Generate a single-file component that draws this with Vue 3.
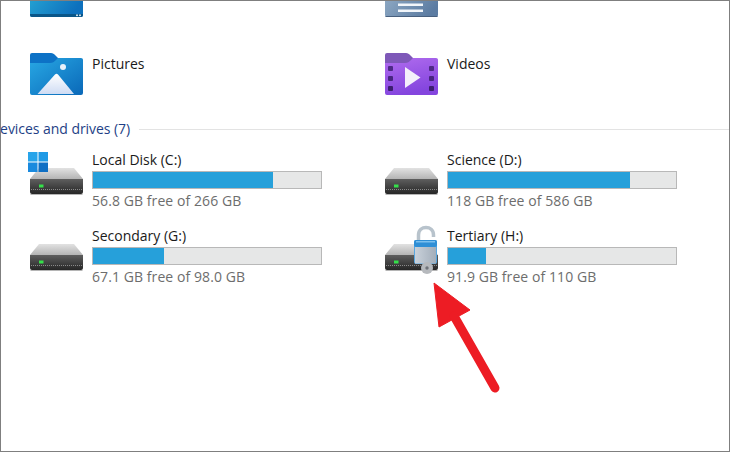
<script setup>
const drives = [
  { name: 'Local Disk (C:)', free: '56.8 GB free of 266 GB', used: 79, badge: 'win' },
  { name: 'Science (D:)', free: '118 GB free of 586 GB', used: 79.8 },
  { name: 'Secondary (G:)', free: '67.1 GB free of 98.0 GB', used: 31.1 },
  { name: 'Tertiary (H:)', free: '91.9 GB free of 110 GB', used: 16.7, badge: 'lock' }
]
</script>

<template>
  <div class="page">
    <div class="row top-row">
      <div class="col">
        <svg class="icon" width="53" height="42" viewBox="0 0 53 42">
          <defs>
            <linearGradient id="tl" x1="0" y1="0" x2="1" y2="0.6">
              <stop offset="0" stop-color="#2cb0d8" />
              <stop offset="1" stop-color="#0d70bd" />
            </linearGradient>
          </defs>
          <rect x="0" y="0" width="53" height="41" rx="2" fill="url(#tl)" />
          <path d="M0 38h53v1a2 2 0 0 1-2 2H2a2 2 0 0 1-2-2z" fill="#0a5688" />
          <rect x="46" y="38.5" width="2" height="1.6" fill="#c6dcea" />
          <rect x="49" y="38.5" width="2" height="1.6" fill="#c6dcea" />
        </svg>
      </div>
      <div class="col">
        <svg class="icon" width="53" height="42" viewBox="0 0 53 42">
          <defs>
            <linearGradient id="tr" x1="0" y1="0" x2="1" y2="0.7">
              <stop offset="0" stop-color="#9fb8cf" />
              <stop offset="1" stop-color="#5c7ca2" />
            </linearGradient>
          </defs>
          <rect x="0" y="0" width="53" height="41" rx="2" fill="url(#tr)" />
          <rect x="13" y="27.5" width="25" height="2.500" fill="#f2f6fa" />
          <rect x="13" y="33.500" width="25" height="2.500" fill="#f2f6fa" />
          <path d="M0 40h53a2 2 0 0 1-2 1H2a2 2 0 0 1-2-1z" fill="#48607f" />
        </svg>
      </div>
    </div>

    <div class="row folder-row">
      <div class="col">
        <svg class="icon" width="53" height="42" viewBox="0 0 53 42">
          <defs>
            <linearGradient id="pb" x1="0" y1="0" x2="1" y2="1">
              <stop offset="0" stop-color="#28a8e4" />
              <stop offset="1" stop-color="#0a68b8" />
            </linearGradient>
            <linearGradient id="pm" x1="0" y1="0" x2="0" y2="1">
              <stop offset="0" stop-color="#ffffff" />
              <stop offset="1" stop-color="#cfdcf4" />
            </linearGradient>
          </defs>
          <path d="M2 0h19c2 0 3 1 4 2l4 4h22a2 2 0 0 1 2 2v4H0V2a2 2 0 0 1 2-2z" fill="#0d72c6" />
          <path d="M0 10h20c3 0 4-1 6-3l2-2h23a2 2 0 0 1 2 2v33a2 2 0 0 1-2 2H2a2 2 0 0 1-2-2z" fill="url(#pb)" />
          <path d="M7.5 41L25 21.5a2 2 0 0 1 3 0L44 41z" fill="url(#pm)" />
          <circle cx="33" cy="14" r="3" fill="#e8f2fb" />
        </svg>
        <div class="name">Pictures</div>
      </div>
      <div class="col">
        <svg class="icon" width="53" height="42" viewBox="0 0 53 42">
          <defs>
            <linearGradient id="vb" x1="0" y1="0" x2="0.3" y2="1">
              <stop offset="0" stop-color="#b06cee" />
              <stop offset="1" stop-color="#8445de" />
            </linearGradient>
          </defs>
          <path d="M2 0h19c2 0 3 1 4 2l4 4h22a2 2 0 0 1 2 2v4H0V2a2 2 0 0 1 2-2z" fill="#7e58b8" />
          <path d="M0 10h20c3 0 4-1 6-3l2-2h23a2 2 0 0 1 2 2v33a2 2 0 0 1-2 2H2a2 2 0 0 1-2-2z" fill="url(#vb)" />
          <rect x="3" y="13" width="5" height="5" rx="1" fill="#4d2a86" />
          <rect x="3" y="23" width="5" height="5" rx="1" fill="#472680" />
          <rect x="3" y="33" width="5" height="5" rx="1" fill="#3c1f70" />
          <rect x="44" y="13" width="5" height="5" rx="1" fill="#4d2a86" />
          <rect x="44" y="23" width="5" height="5" rx="1" fill="#472680" />
          <rect x="44" y="33" width="5" height="5" rx="1" fill="#3c1f70" />
          <path d="M20 14L35.500 24.500 20 35z" fill="#f4effb" />
        </svg>
        <div class="name">Videos</div>
      </div>
    </div>

    <div class="section">
      <span class="section-title">Devices and drives (7)</span>
      <span class="section-line"></span>
    </div>

    <div class="drives">
      <div v-for="d in drives" :key="d.name" class="col drive">
        <div class="drive-icon">
          <svg width="62" height="46" viewBox="0 0 62 46">
            <defs>
              <linearGradient id="dt" x1="0" y1="0" x2="0" y2="1">
                <stop offset="0" stop-color="#e2e2e2" />
                <stop offset="1" stop-color="#b4b4b4" />
              </linearGradient>
              <linearGradient id="df" x1="0" y1="0" x2="0" y2="1">
                <stop offset="0" stop-color="#5e5e5e" />
                <stop offset="1" stop-color="#262626" />
              </linearGradient>
              <linearGradient id="lb" x1="0" y1="0" x2="1" y2="0">
                <stop offset="0" stop-color="#c9d1da" />
                <stop offset="1" stop-color="#a3aeba" />
              </linearGradient>
            </defs>
            <path d="M9 18h35l9 11H0z" fill="url(#dt)" />
            <path d="M0 29h53v13a2 2 0 0 1-2 2H2a2 2 0 0 1-2-2z" fill="url(#df)" />
            <path d="M1 39.500H52" stroke="#8a8a8a" stroke-width="1" stroke-dasharray="1 1" />
            <rect x="0.500" y="44" width="52" height="1" fill="#b5b5b5" />
            <rect x="9" y="34.500" width="4.500" height="3" fill="#35e04a" />
            <template v-if="d.badge === 'win'">
              <rect x="-2" y="2" width="9.500" height="9.500" fill="#27a4ea" />
              <rect x="8.500" y="2" width="9.500" height="9.500" fill="#1f9ae6" />
              <rect x="-2" y="12.500" width="9.500" height="9.500" fill="#1a8ade" />
              <rect x="8.500" y="12.500" width="9.500" height="9.500" fill="#0f6fc4" />
            </template>
            <template v-if="d.badge === 'lock'">
              <path d="M33.500 15V9C33.500 -1 48.500 -1 48.500 9V11" fill="none" stroke="#b8c3cc" stroke-width="3.500" />
              <rect x="29" y="14" width="23" height="24" rx="2" fill="#5aa7e0" />
              <rect x="29" y="14" width="23" height="7" rx="2" fill="#2f8fd6" />
              <rect x="30" y="21" width="21" height="16.500" fill="url(#lb)" />
              <rect x="31" y="15" width="19" height="1.500" fill="#7cc0ee" />
              <circle cx="42" cy="42" r="6" fill="#b6b9bd" />
              <circle cx="42" cy="42" r="1.700" fill="#6f7379" />
            </template>
          </svg>
        </div>
        <div class="info">
          <div class="name">{{ d.name }}</div>
          <div class="bar"><div class="fill" :style="{ width: d.used + '%' }"></div></div>
          <div class="free">{{ d.free }}</div>
        </div>
      </div>
    </div>

    <svg class="arrow" width="80" height="120" viewBox="0 0 80 120">
      <path d="M4 3L40 30 9 47z" fill="#ed1c24" stroke="#ed1c24" stroke-width="1" stroke-linejoin="round" />
      <path d="M24 36L65 108" stroke="#ed1c24" stroke-width="9" stroke-linecap="round" fill="none" />
    </svg>
  </div>
</template>

<style scoped>
.page {
  position: relative;
  box-sizing: border-box;
  width: 730px;
  height: 452px;
  overflow: hidden;
  background: #ffffff;
  border: 1px solid #7f7f7f;
  font-family: "Open Sans", "Noto Sans", sans-serif;
  font-size: 14px;
}
.row {
  display: grid;
  grid-template-columns: 355px 355px;
  padding-left: 29px;
}
.col {
  display: flex;
  align-items: flex-start;
}
.top-row {
  height: 17px;
  overflow: hidden;
  align-items: end;
}
.top-row .col {
  height: 17px;
  align-items: flex-end;
}
.icon {
  flex: none;
  display: block;
}
.folder-row {
  margin-top: 35px;
}
.folder-row .icon {
  margin-right: 9px;
}
.name {
  color: #1a1a1a;
  line-height: 20px;
}
.folder-row .name {
  margin-top: 1px;
}
.section {
  display: flex;
  align-items: center;
  gap: 9px;
  margin-top: 24px;
  margin-left: -11px;
  height: 20px;
}
.section-title {
  color: #1e3f86;
  white-space: nowrap;
  letter-spacing: -0.05px;
  line-height: 19px;
  margin-bottom: 1px;
}
.section-line {
  flex: 1;
  height: 1px;
  background: #e3e3e3;
}
.drives {
  display: grid;
  grid-template-columns: 355px 355px;
  grid-auto-rows: 76px;
  padding-left: 29px;
  margin-top: 11px;
}
.drive-icon {
  flex: none;
  width: 62px;
  height: 46px;
}
.drive-icon svg {
  display: block;
  overflow: visible;
}
.info {
  width: 230px;
}
.bar {
  box-sizing: border-box;
  height: 18px;
  margin-top: 1px;
  border: 1px solid #b8b8b8;
  background: #e6e7e7;
}
.fill {
  height: 100%;
  background: #26a0da;
}
.free {
  margin-top: 2px;
  line-height: 20px;
  color: #6d6d6d;
  letter-spacing: 0.08px;
}
.arrow {
  position: absolute;
  left: 429px;
  top: 279px;
}
</style>
